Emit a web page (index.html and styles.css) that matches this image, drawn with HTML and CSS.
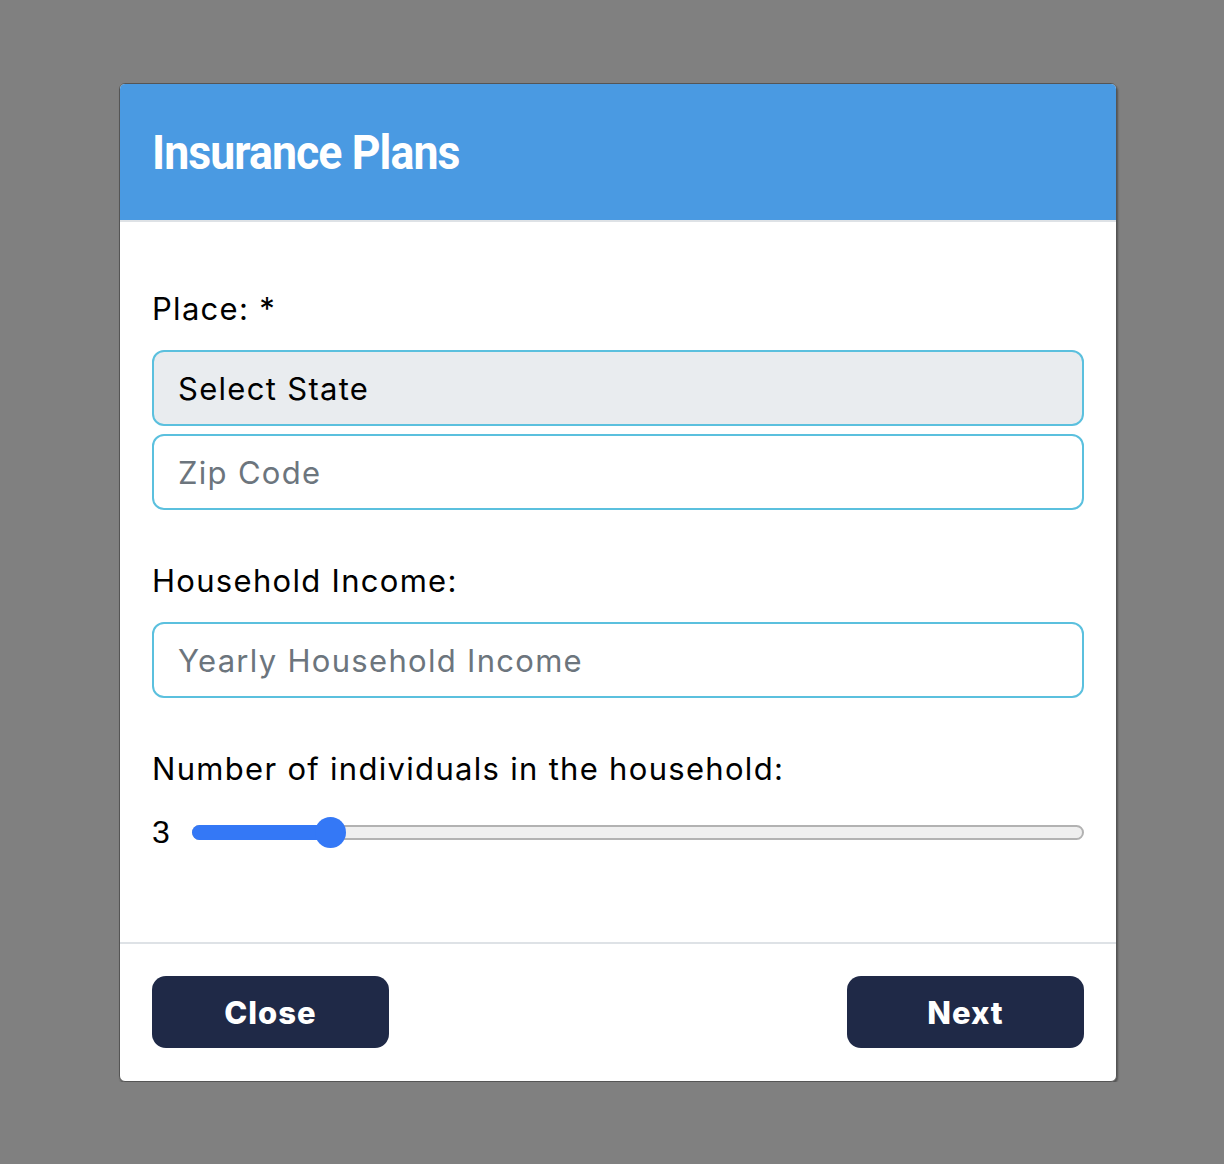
FILE: index.html
```html
<!DOCTYPE html>
<html lang="en">
<head>
<meta charset="utf-8">
<title>Insurance Plans</title>
<link rel="stylesheet" href="styles.css">
</head>
<body>
<div class="modal">
  <header class="modal-header">
    <h1 class="modal-title">Insurance Plans</h1>
  </header>
  <main class="modal-body">
    <div class="field">
      <label class="label">Place: *</label>
      <div class="input-group">
        <div class="input select">Select State</div>
        <div class="input placeholder">Zip Code</div>
      </div>
    </div>
    <div class="field">
      <label class="label">Household Income:</label>
      <div class="input placeholder">Yearly Household Income</div>
    </div>
    <div class="field">
      <label class="label">Number of individuals in the household:</label>
      <div class="range-row">
        <span class="range-value">3</span>
        <div class="slider" role="slider" aria-valuemin="1" aria-valuemax="15" aria-valuenow="3" style="--p: 0.142857">
          <div class="slider-fill"></div>
          <div class="slider-thumb"></div>
        </div>
      </div>
    </div>
  </main>
  <footer class="modal-footer">
    <button class="btn">Close</button>
    <button class="btn">Next</button>
  </footer>
</div>
</body>
</html>
```
FILE: styles.css
```css
* { box-sizing: border-box; }
html, body { margin: 0; padding: 0; }
body {
  background: #808080;
  font-family: "Inter", "Open Sans", sans-serif;
  color: #000;
  padding-top: 83px;
}
.modal {
  width: 998px;
  margin-left: 119px;
  background: #fff;
  border: 1px solid #555;
  border-radius: 6px;
  box-shadow: 1px 2px 2px rgba(0,0,0,0.35);
  overflow: hidden;
}
.modal-header {
  background: #4a9ae2;
  height: 138px;
  border-bottom: 2px solid #dee2e6;
  display: flex;
  align-items: center;
  padding: 0 32px;
}
.modal-title {
  margin: 0;
  color: #fff;
  font-family: "Roboto", sans-serif;
  font-weight: 700;
  font-size: 48px;
  letter-spacing: -1px;
  transform: scaleX(0.93);
  transform-origin: left center;
}
.modal-body {
  padding: 67px 32px 90px;
  display: flex;
  flex-direction: column;
  gap: 51px;
}
.field {
  display: flex;
  flex-direction: column;
  gap: 21px;
}
.input-group {
  display: flex;
  flex-direction: column;
  gap: 8px;
}
.label {
  font-size: 31px;
  line-height: 40px;
  letter-spacing: 1.3px;
}
.input {
  height: 76px;
  border: 2px solid #5bc0de;
  border-radius: 12px;
  padding: 0 24px;
  display: flex;
  align-items: center;
  font-size: 31px;
  letter-spacing: 1.3px;
}
.select { background: #e9ecef; }
.placeholder { color: #6c757d; }
.range-row {
  display: flex;
  align-items: center;
  gap: 20px;
  height: 40px;
  margin-top: 2px;
}
.range-value {
  font-family: "Liberation Sans", sans-serif;
  font-size: 32px;
  width: 20px;
}
.slider {
  position: relative;
  flex: 1;
  height: 15px;
  border: 2px solid #b2b2b2;
  background: #efefef;
  border-radius: 8px;
}
.slider-fill {
  position: absolute;
  left: -2px;
  top: -2px;
  bottom: -2px;
  width: calc(16px + (100% - 30px) * var(--p));
  background: #3478f6;
  border-radius: 8px;
}
.slider-thumb {
  position: absolute;
  top: 50%;
  left: calc((100% - 30px) * var(--p) - 2px);
  width: 31px;
  height: 31px;
  margin-top: -15.5px;
  border-radius: 50%;
  background: #3478f6;
}
.modal-footer {
  border-top: 2px solid #dee2e6;
  padding: 32px 32px 33px;
  display: flex;
  justify-content: space-between;
}
.btn {
  width: 237px;
  height: 72px;
  background: #1f2947;
  color: #fff;
  border: none;
  border-radius: 14px;
  font-family: "Inter", sans-serif;
  font-weight: 800;
  font-size: 31px;
  letter-spacing: 1px;
  cursor: pointer;
}
```
